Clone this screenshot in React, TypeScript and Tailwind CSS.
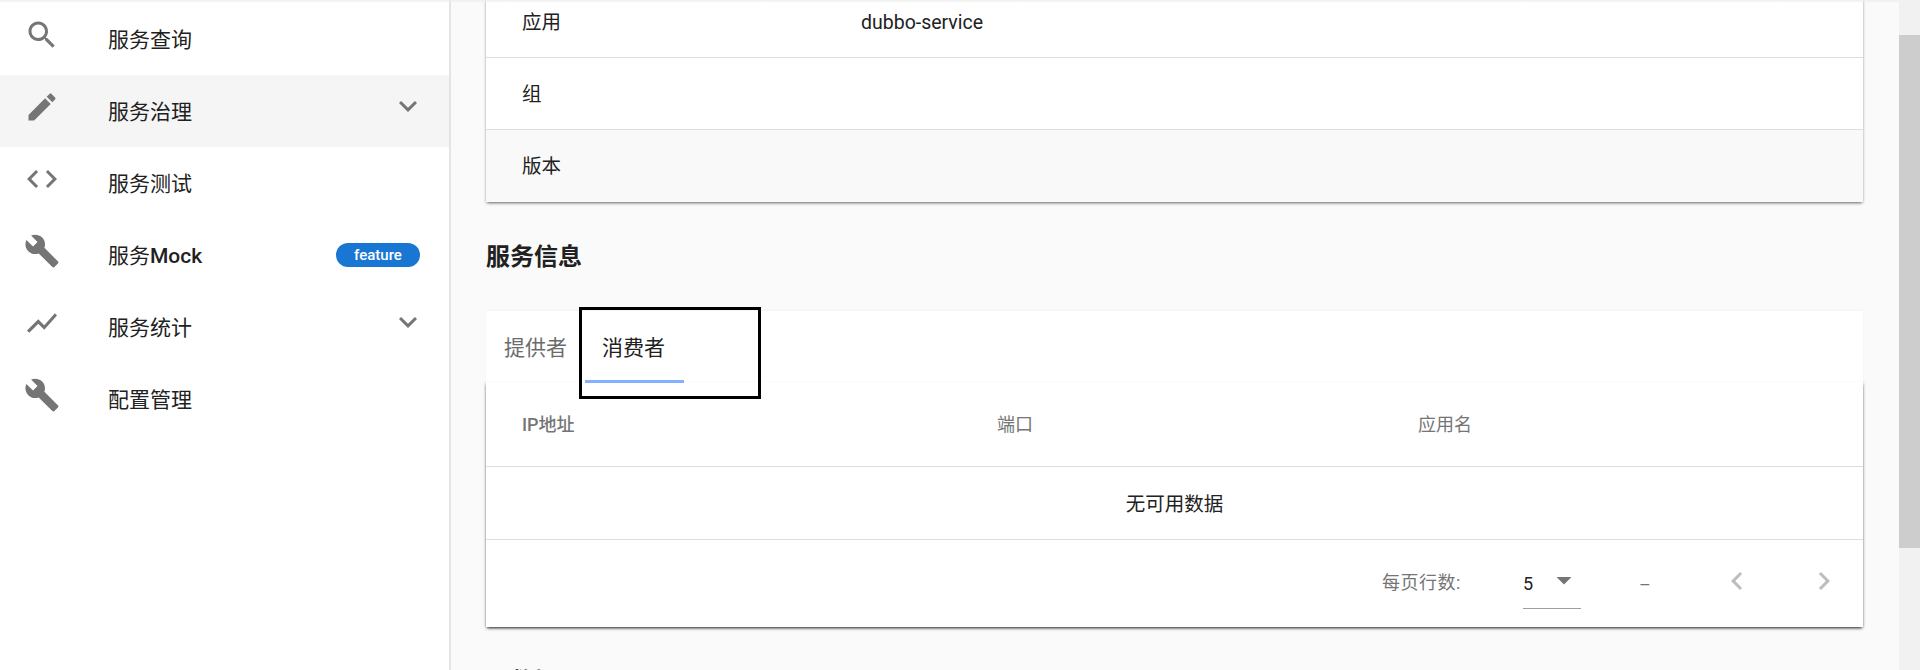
import React from 'react';

const paths = {
  search: 'M15.5 14h-.79l-.28-.27C15.41 12.59 16 11.11 16 9.5 16 5.91 13.09 3 9.5 3S3 5.91 3 9.5 5.91 16 9.5 16c1.61 0 3.09-.59 4.23-1.57l.27.28v.79l5 4.99L20.49 19l-4.99-5zm-6 0C7.01 14 5 11.99 5 9.5S7.01 5 9.5 5 14 7.01 14 9.5 11.99 14 9.5 14z',
  edit: 'M3 17.25V21h3.75L17.81 9.94l-3.75-3.75L3 17.25zM20.71 7.04c.39-.39.39-1.02 0-1.41l-2.34-2.34c-.39-.39-1.02-.39-1.41 0l-1.83 1.83 3.75 3.75 1.83-1.83z',
  code: 'M9.4 16.6L4.8 12l4.6-4.6L8 6l-6 6 6 6 1.4-1.4zm5.2 0l4.6-4.6-4.6-4.6L16 6l6 6-6 6-1.4-1.4z',
  build: 'M22.7 19l-9.1-9.1c.9-2.3.4-5-1.5-6.9-2-2-5-2.4-7.4-1.3L9 6 6 9 1.6 4.7C.4 7.1.9 10.1 2.9 12.1c1.9 1.9 4.6 2.4 6.9 1.5l9.1 9.1c.4.4 1 .4 1.4 0l2.3-2.3c.5-.4.5-1.1.1-1.4z',
  chart: 'M3.5 18.49l6-6.01 4 4L22 6.92l-1.41-1.41-7.09 7.97-4-4L2 16.99z',
  expand: 'M16.59 8.59L12 13.17 7.41 8.59 6 10l6 6 6-6z',
  left: 'M15.41 7.41L14 6l-6 6 6 6 1.41-1.41L10.83 12z',
  right: 'M10 6L8.59 7.41 13.17 12l-4.58 4.59L10 18l6-6z',
  drop: 'M7 10l5 5 5-5z',
};

type IconName = keyof typeof paths;

const Icon: React.FC<{ name: IconName; className?: string }> = ({ name, className = '' }) => (
  <svg viewBox="0 0 24 24" className={`h-9 w-9 shrink-0 fill-current ${className}`}>
    <path d={paths[name]} />
  </svg>
);

const navItems: { icon: IconName; label: string; latin?: string; expand?: boolean; badge?: string; active?: boolean }[] = [
  { icon: 'search', label: '服务查询' },
  { icon: 'edit', label: '服务治理', expand: true, active: true },
  { icon: 'code', label: '服务测试' },
  { icon: 'build', label: '服务', latin: 'Mock', badge: 'feature' },
  { icon: 'chart', label: '服务统计', expand: true },
  { icon: 'build', label: '配置管理' },
];

const Sidebar = () => (
  <aside className="h-full w-[451px] shrink-0 border-r-2 border-[#e4e4e4] bg-white pt-[3px]">
    {navItems.map((item) => (
      <div
        key={item.label + item.icon}
        className={`relative flex h-[72px] items-center pl-[108px] pr-[29px] ${item.active ? 'bg-[#f5f5f5]' : ''}`}
      >
        <Icon name={item.icon} className="absolute left-6 top-[14px] text-[#757575]" />
        <span className="pt-[3px] text-[21px] text-[#212121]">
          {item.label}
          {item.latin && <span className="font-medium">{item.latin}</span>}
        </span>
        {item.expand && <Icon name="expand" className="absolute left-[390px] top-[13px] text-[#757575]" />}
        {item.badge && (
          <span className="ml-auto flex h-6 w-[84px] items-center justify-center rounded-full bg-[#1976d2] text-[15px] font-medium text-white">
            {item.badge}
          </span>
        )}
      </div>
    ))}
  </aside>
);

const infoRows = [
  { label: '应用', value: 'dubbo-service', bg: 'bg-white' },
  { label: '组', value: '', bg: 'bg-white' },
  { label: '版本', value: '', bg: 'bg-[#f9f9f9]' },
];

const InfoTable = () => (
  <div className="-mt-[14px] shadow-[0_2px_3px_-1px_rgba(0,0,0,0.55),0_0_3px_0_rgba(0,0,0,0.14)]">
    {infoRows.map((row, i) => (
      <div
        key={row.label}
        className={`grid h-[72px] grid-cols-[339px_1fr] items-center pl-9 pt-[2px] text-[19.5px] text-[#212121] ${row.bg} ${
          i < 2 ? 'border-b border-[#dedede]' : ''
        }`}
      >
        <span>{row.label}</span>
        <span>{row.value}</span>
      </div>
    ))}
  </div>
);

const Tabs = () => (
  <div className="relative z-10 flex h-[71px] items-start border-b border-[#fbfbfb] bg-white shadow-[0_-1px_2px_0_rgba(0,0,0,0.04)]">
    <div className="pl-[18px] pt-[22px] text-[21px] text-[#6b6b6b]">提供者</div>
    <div className="relative ml-[35px] pt-[22px] text-[21px] text-[#212121]">
      消费者
      <div className="pointer-events-none absolute -left-[23px] -top-[4px] h-[92px] w-[182px] border-[3px] border-black" />
      <div className="absolute -left-[17px] top-[69px] h-[3px] w-[99px] bg-[#82b1ff]" />
    </div>
  </div>
);

const ConsumerTable = () => (
  <div>
    <Tabs />
    <div className="bg-white shadow-[0_2px_3px_-1px_rgba(0,0,0,0.85),0_0_3px_0_rgba(0,0,0,0.22)]">
      <div className="grid h-[85px] grid-cols-[475px_421px_1fr] items-center border-b border-[#dedede] pl-9 text-[18px] font-medium text-[#757575]">
        <span>IP地址</span>
        <span className="font-normal">端口</span>
        <span className="font-normal">应用名</span>
      </div>
      <div className="flex h-[73px] items-center justify-center border-b border-[#dedede] pt-[3px] text-[19.5px] text-[#212121]">
        无可用数据
      </div>
      <div className="flex h-[87px] items-center pb-[2px] text-[18px] text-[#757575]">
        <span className="ml-[896px] w-[141px] tracking-[0.5px]">每页行数:</span>
        <div className="relative flex h-[50px] w-[58px] items-start pt-[11px] text-[18px] text-[#212121]">
          <span className="leading-[30px]">5</span>
          <Icon name="drop" className="absolute left-[23px] top-[4px] text-[#757575]" />
          <div className="absolute bottom-[-1px] left-0 h-px w-full bg-[#9e9e9e]" />
        </div>
        <span className="ml-[58px] mt-[3px]">–</span>
        <Icon name="left" className="ml-[68px] mb-1 text-[#bdbdbd]" />
        <Icon name="right" className="ml-[51px] mb-1 text-[#bdbdbd]" />
      </div>
    </div>
  </div>
);

const Main = () => (
  <main className="h-full min-w-0 flex-1 overflow-hidden bg-[#fafafa] pl-[35px] pr-9">
    <InfoTable />
    <h2 className="flex h-[109px] items-center text-2xl font-bold text-[#212121]">服务信息</h2>
    <ConsumerTable />
    <h2 className="flex h-[109px] items-center text-2xl font-bold text-[#212121]">元数据</h2>
  </main>
);

const Scrollbar = () => (
  <div className="h-full w-[21px] shrink-0 bg-[#f1f1f1] pt-[35px]">
    <div className="h-[513px] bg-[#cdcdcd]" />
  </div>
);

export default function App() {
  return (
    <div
      className="relative flex h-[670px] w-[1920px] overflow-hidden"
      style={{ fontFamily: 'Roboto, "Noto Sans CJK SC", sans-serif' }}
    >
      <Sidebar />
      <Main />
      <Scrollbar />
      {/* shadow of the toolbar scrolled off the top */}
      <div className="pointer-events-none absolute left-0 right-[21px] top-0 h-[3px] bg-gradient-to-b from-[#eeeeee] to-transparent" />
    </div>
  );
}
